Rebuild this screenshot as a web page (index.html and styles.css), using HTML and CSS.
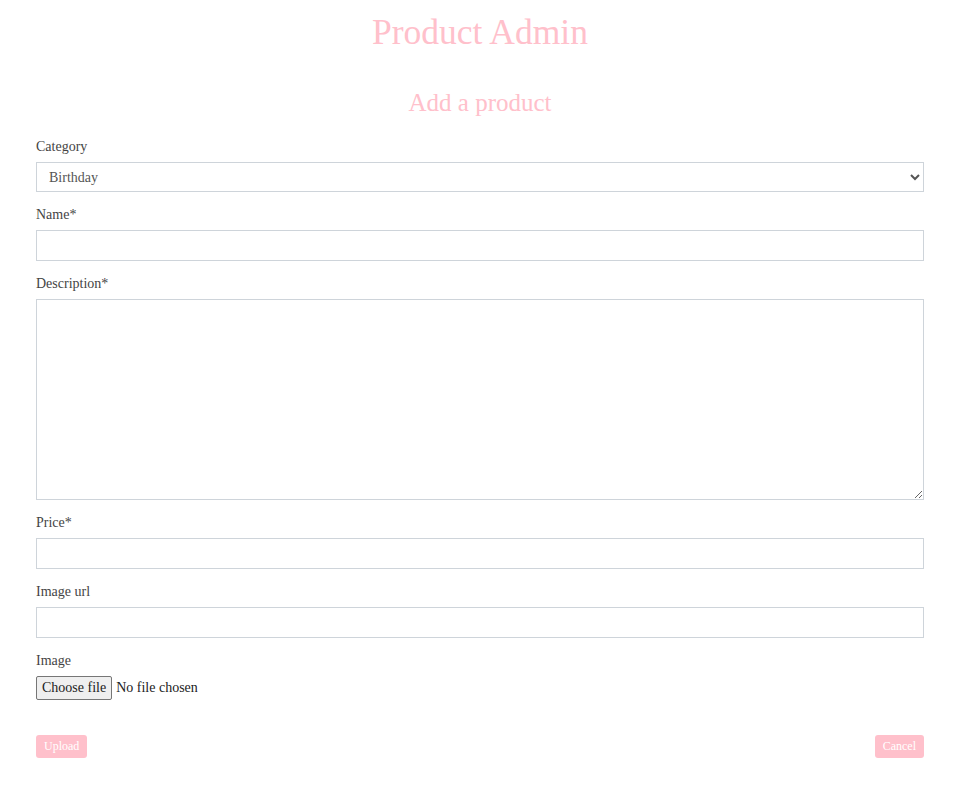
FILE: index.html
```html
<!DOCTYPE html>
<html lang="en">
<head>
<meta charset="utf-8">
<title>Product Admin</title>
<link rel="stylesheet" href="styles.css">
</head>
<body>
<div class="page">
  <h1 class="title">Product Admin</h1>
  <h2 class="subtitle">Add a product</h2>
  <form class="form">
    <div class="field">
      <label class="label" for="category">Category</label>
      <select id="category" class="control select">
        <option>Birthday</option>
        <option>Wedding</option>
        <option>Anniversary</option>
      </select>
    </div>
    <div class="field">
      <label class="label" for="name">Name*</label>
      <input id="name" class="control input" type="text">
    </div>
    <div class="field">
      <label class="label" for="description">Description*</label>
      <textarea id="description" class="control textarea"></textarea>
    </div>
    <div class="field">
      <label class="label" for="price">Price*</label>
      <input id="price" class="control input" type="text">
    </div>
    <div class="field">
      <label class="label" for="imageurl">Image url</label>
      <input id="imageurl" class="control input" type="text">
    </div>
    <div class="field">
      <span class="label">Image</span>
      <div class="file-row">
        <label class="file-btn" for="image">Choose file</label>
        <span class="file-name">No file chosen</span>
        <input id="image" class="file-input" type="file">
      </div>
    </div>
    <div class="actions">
      <button type="button" class="btn">Upload</button>
      <button type="button" class="btn">Cancel</button>
    </div>
  </form>
</div>
</body>
</html>
```

FILE: styles.css
```css
html, body {
  margin: 0;
  padding: 0;
  background: #ffffff;
}

body {
  font-family: "Liberation Serif", "DejaVu Serif", serif;
  color: #444444;
}

.page {
  width: 888px;
  margin-left: 36px;
}

.title {
  margin: 0;
  padding-top: 12px;
  height: 40px;
  line-height: 40px;
  font-size: 35.5px;
  font-weight: 400;
  color: #ffc0cb;
  text-align: center;
}

.subtitle {
  margin: 0;
  padding-top: 36px;
  height: 30px;
  line-height: 30px;
  font-size: 25px;
  font-weight: 400;
  color: #ffc0cb;
  text-align: center;
}

.form {
  display: flex;
  flex-direction: column;
  padding-top: 18px;
}

.field {
  display: flex;
  flex-direction: column;
  align-items: flex-start;
  margin-bottom: 12px;
}

.label {
  display: block;
  font-size: 14px;
  line-height: 20px;
  height: 20px;
  padding-top: 1px;
  margin-bottom: 5px;
  color: #444444;
}

.control {
  box-sizing: border-box;
  width: 100%;
  border: 1px solid #ced4da;
  border-radius: 0;
  background: #ffffff;
  font-family: inherit;
  font-size: 14px;
  color: #555555;
  margin: 0;
}

.select {
  height: 30px;
  padding: 0 8px;
}

.input {
  height: 31px;
  padding: 0 12px;
}

.textarea {
  height: 201px;
  padding: 6px 12px;
  resize: vertical;
}

.file-row {
  display: flex;
  align-items: center;
  gap: 4px;
  height: 24px;
}

.file-btn {
  box-sizing: border-box;
  height: 24px;
  line-height: 22px;
  padding: 0 5px;
  background: #efefef;
  border: 1px solid #767676;
  border-radius: 2px;
  font-size: 14px;
  color: #222222;
  cursor: pointer;
}

.file-name {
  font-size: 14px;
  color: #222222;
}

.file-input {
  display: none;
}

.actions {
  display: flex;
  justify-content: space-between;
  padding-top: 23px;
}

.btn {
  height: 23px;
  padding: 0 8px;
  border: none;
  border-radius: 3px;
  background: #ffc0cb;
  color: #ffffff;
  font-family: inherit;
  font-size: 12px;
  cursor: pointer;
}
```
